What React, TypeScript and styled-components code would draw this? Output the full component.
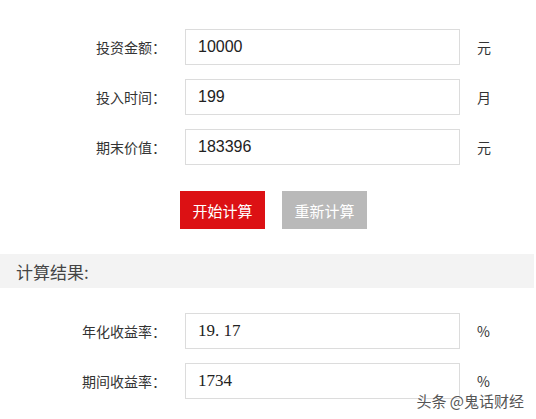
import React, { useState } from 'react'
import styled, { createGlobalStyle } from 'styled-components'

const GlobalStyle = createGlobalStyle`
    body {
        margin: 0;
        background: #ffffff;
        font-family: "Liberation Sans", "Noto Sans CJK SC", sans-serif;
    }
`

const Page = styled.div`
    position: relative;
    width: 536px;
    height: 419px;
    overflow: hidden;
    background: #ffffff;
`

const Form = styled.div<{ $top: number }>`
    display: grid;
    grid-template-columns: 166px 275px auto;
    column-gap: 19px;
    row-gap: 14px;
    align-items: center;
    padding-top: ${({ $top }) => $top}px;
`

const Label = styled.label`
    text-align: right;
    font-size: 14px;
    line-height: 16px;
    color: #333333;
    font-family: "Noto Sans CJK SC", sans-serif;
`

const Input = styled.input<{ $serif?: boolean }>`
    box-sizing: border-box;
    width: 275px;
    height: 36px;
    padding: 0 12px;
    border: 1px solid #dcdcdc;
    outline: none;
    font-size: ${({ $serif }) => ($serif ? '17px' : '16px')};
    color: #222222;
    font-family: ${({ $serif }) =>
        $serif ? '"Liberation Serif", "Noto Sans CJK SC", serif' : '"Liberation Sans", "Noto Sans CJK SC", sans-serif'};
`

const Unit = styled.span`
    margin-left: -2px;
    font-size: 14px;
    line-height: 14px;
    color: #333333;
    font-family: "Noto Sans CJK SC", sans-serif;
`

const Buttons = styled.div`
    display: flex;
    gap: 17px;
    padding: 26px 0 0 180px;
`

const Button = styled.button<{ $primary?: boolean }>`
    width: 85px;
    height: 38px;
    border: none;
    padding: 0;
    background: ${({ $primary }) => ($primary ? '#dc1114' : '#b9b9b9')};
    color: #ffffff;
    font-size: 15px;
    font-family: "Noto Sans CJK SC", sans-serif;
    cursor: pointer;
`

const ResultBar = styled.div`
    margin-top: 25px;
    width: 534px;
    height: 34px;
    display: flex;
    align-items: center;
    padding-left: 16px;
    box-sizing: border-box;
    background: #f3f3f3;
    color: #444444;
    font-size: 17px;
    font-family: "Noto Sans CJK SC", sans-serif;
`

const Watermark = styled.div`
    position: absolute;
    right: 12px;
    bottom: 11px;
    font-size: 15px;
    line-height: 15px;
    color: #555555;
    font-family: "Noto Sans CJK SC", sans-serif;
    text-shadow: 0 0 2px #ffffff, 0 0 2px #ffffff;
`

const App: React.FC = () => {
    const [amount, setAmount] = useState<string>('10000')
    const [months, setMonths] = useState<string>('199')
    const [value, setValue] = useState<string>('183396')

    return (
        <Page>
            <GlobalStyle />
            <Form $top={29}>
                <Label>投资金额：</Label>
                <Input value={amount} onChange={(e) => setAmount(e.target.value)} />
                <Unit>元</Unit>
                <Label>投入时间：</Label>
                <Input value={months} onChange={(e) => setMonths(e.target.value)} />
                <Unit>月</Unit>
                <Label>期末价值：</Label>
                <Input value={value} onChange={(e) => setValue(e.target.value)} />
                <Unit>元</Unit>
            </Form>
            <Buttons>
                <Button $primary>开始计算</Button>
                <Button>重新计算</Button>
            </Buttons>
            <ResultBar>计算结果:</ResultBar>
            <Form $top={25}>
                <Label>年化收益率：</Label>
                <Input $serif readOnly value="19. 17" />
                <Unit>%</Unit>
                <Label>期间收益率：</Label>
                <Input $serif readOnly value="1734" />
                <Unit>%</Unit>
            </Form>
            <Watermark>头条 @鬼话财经</Watermark>
        </Page>
    )
}

export default App
